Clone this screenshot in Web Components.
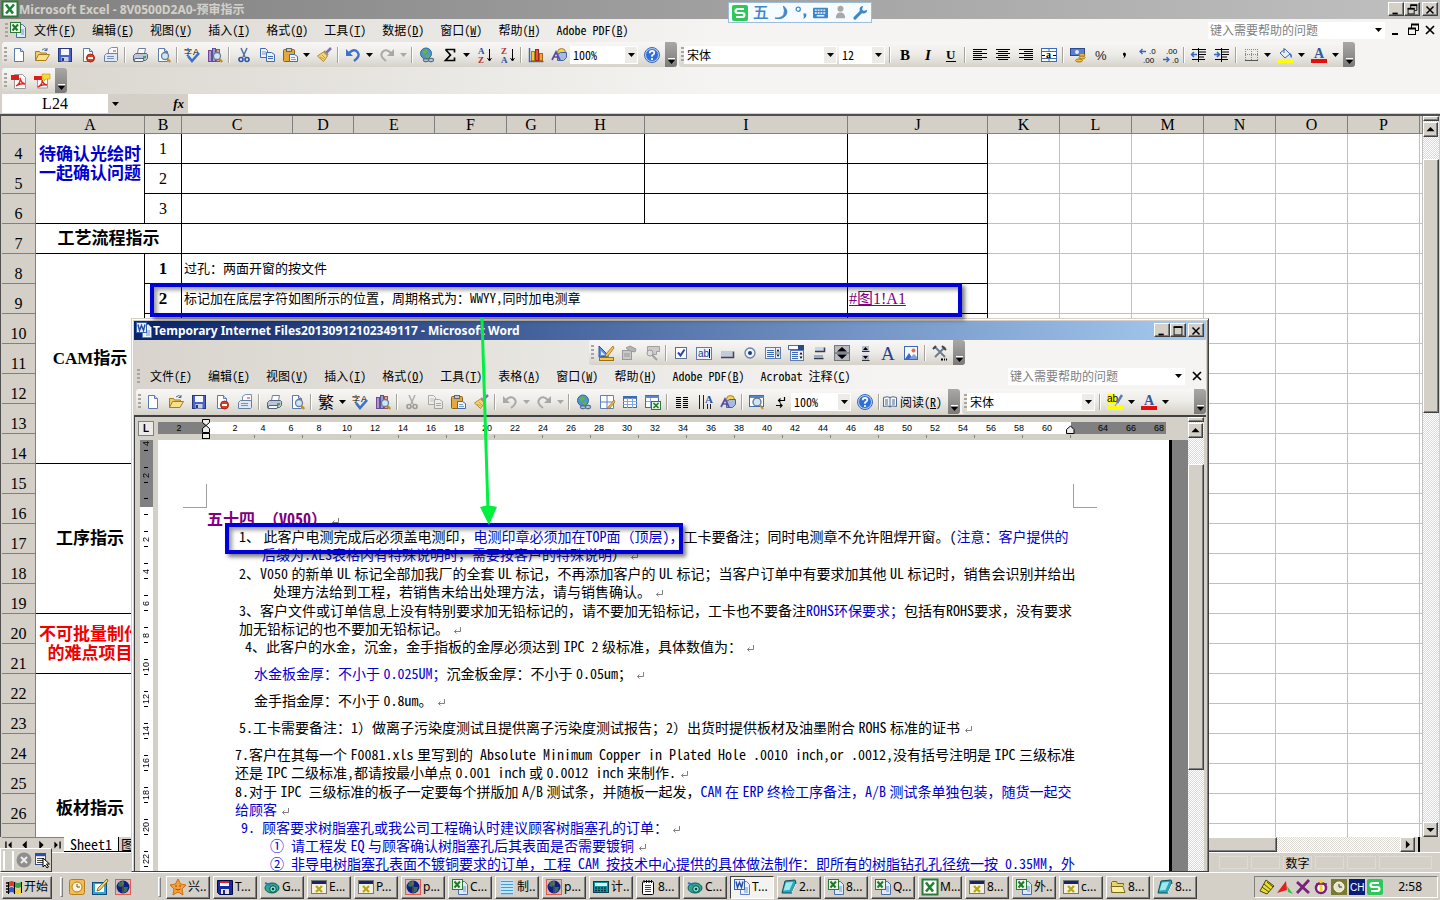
<!DOCTYPE html>
<html lang="zh-CN">
<head>
<meta charset="utf-8">
<title>Microsoft Excel - 8V0500D2A0-预审指示</title>
<style>
:root {
    --face: #d4d0c8;
    --song: 'Noto Sans Mono CJK SC', 'Noto Sans CJK SC', sans-serif;
    --cell: 'Liberation Serif', 'Noto Sans CJK SC', serif;
    --ui: 'Noto Sans', 'Noto Sans CJK SC', sans-serif;
}

html, body {
    height: 100%;
    margin: 0;
    overflow: hidden;
}

body {
    background: var(--face);
    color: #000;
    font: 12px/16px var(--song);
}
</style>
</head>
<body>
<desk-top></desk-top>

<script>
/* ---------- icon set, all on a 16x16 grid ---------- */
const page = '<path d="M3.5 1.5h6l3 3v10h-9z" fill="#fff" stroke="#5b7ba8"/><path d="M9.5 1.5v3h3" fill="#c9d8ee" stroke="#5b7ba8"/>';
const magnifier = '<circle cx="10" cy="9" r="3.5" fill="#cfe6f7" stroke="#6a7f96" stroke-width="1.3"/><path d="M12.5 12l2.7 3" stroke="#c98a2c" stroke-width="2.4"/>';
const excelDoc = '<path d="M6.5 2.5h6l3 3v10h-9z" fill="#dfeafc" stroke="#4a6ea8"/><path d="M11 8h3M11 10h3M11 12h3" stroke="#6f95cf"/><rect x=".5" y=".5" width="10" height="10" fill="#eaf5e6" stroke="#2c7a35"/><path d="M2.5 2.5l5 6M8 2.5l-5.500 6" stroke="#1f7a2b" stroke-width="2"/>';
const wordDoc = '<path d="M6.500 2.500h6l3 3v10h-9z" fill="#eef4ff" stroke="#5b7fc0"/><path d="M10 9h4M10 11h4M10 13h4" stroke="#6f95cf"/><rect x=".5" y=".5" width="10" height="10" fill="#e8effc" stroke="#3861b0"/><path d="M2 2.500l1.500 6 2-5 2 5 1.500-6" stroke="#1f4ba5" stroke-width="1.400" fill="none"/>';
const xWindow = '<rect x=".5" y="1.500" width="15" height="13" fill="#f3f0dc" stroke="#777"/><rect x="1" y="2" width="14" height="3" fill="#15246e"/><path d="M5 7l6 6M11 7l-6 6" stroke="#b9a514" stroke-width="2.200"/>';
const earth = '<rect x=".5" y=".5" width="15" height="15" fill="#d5bcb8" stroke="#e05a50"/><circle cx="8" cy="8" r="6.500" fill="#10207e"/><path d="M4 3l4-1 1 3-3 3-3-1zM9 8l4 0-1 4-3 2z" fill="#3b6d5d"/><path d="M8 1.500v13" stroke="#8a8f4c" stroke-width=".7"/>';
const book = '<path d="M4 2l10-1 1 3-4 10-10 0z" fill="#2aa7b3" stroke="#114d5c"/><path d="M5 3.500l7-.5-3.500 8-6 .5z" fill="#9ee9ef"/><path d="M11 14l4-9" stroke="#fff"/>';
const eye = '<ellipse cx="8" cy="9" rx="7" ry="5" fill="#2da898" stroke="#0d5b55"/><circle cx="9" cy="10" r="3.300" fill="#86e0cf" stroke="#08504c"/><circle cx="9" cy="10" r="1.200" fill="#063c3c"/><path d="M1 4l5 2" stroke="#2d7db3" stroke-width="2"/>';
const lines = (y, list) => list.map(([x, w], i) => `<path d="M${x} ${y + i * 2}.500h${w}" stroke="#000"/>`).join('');
const arrowDown = '<path d="M13.500 2v11M11.500 11l2 3 2-3" stroke="#000" fill="none"/>';
const globe = '<circle cx="7" cy="6.500" r="5.500" fill="#4f93cf" stroke="#2b6a9b"/><path d="M3 4l4-2 2 3-4 3zM7 8l4-1-1 4-3 0z" fill="#5db352"/><rect x="4.500" y="11.500" width="5" height="3" rx="1.500" fill="none" stroke="#56708f" stroke-width="1.300"/><rect x="9.500" y="11.500" width="5" height="3" rx="1.500" fill="none" stroke="#56708f" stroke-width="1.300"/>';
const glyph = (s, x, y, size, fill, extra = '') => `<text x="${x}" y="${y}" font-size="${size}" fill="${fill}" ${extra}>${s}</text>`;
const serifBold = 'font-family="Liberation Serif" font-weight="700"';
const sans = 'font-family="Liberation Sans"';

const ICONS = {
    new: page,
    open: '<path d="M1.500 13.500v-9h4l1 1.500h6v2" fill="#f3cf6b" stroke="#a87b1e"/><path d="M1.500 13.500l3-6h11l-3.500 6z" fill="#fbe08a" stroke="#a87b1e"/><path d="M8 3q3-3 5 0M13 1v2.500h-2.500" fill="none" stroke="#45699c"/>',
    save: '<rect x="1.500" y="1.500" width="13" height="13" fill="#4a62c4" stroke="#27377f"/><rect x="4" y="2" width="8" height="6" fill="#f4f6fb"/><rect x="4.500" y="10" width="7" height="4.500" fill="#c9cfe0"/><path d="M6 11v3" stroke="#27377f" stroke-width="2"/>',
    perm: page + '<circle cx="10.500" cy="11" r="4" fill="#dc3f28" stroke="#a12413"/><path d="M8 11h5" stroke="#fff" stroke-width="2"/>',
    mail: '<path d="M5.500 6.500v-4l3-2h6v7" fill="#f7f9fd" stroke="#7d8fab"/><path d="M10 4h3" stroke="#c33"/><path d="M1.500 8.500l2-2h11v7l-1 1h-12z" fill="#dfe7f3" stroke="#6980a5"/><path d="M4 9.500h7M4 11.500h7" stroke="#7890b5"/>',
    print: '<path d="M5.500 6.500l1-5h7l-1 5" fill="#fff" stroke="#6d7f9c"/><path d="M1.500 8.500l2-2h11l1 1v4l-2 2h-12z" fill="#bdc6d6" stroke="#56657f"/><path d="M3 11.500h9l-1 3h-9z" fill="#f3f6fa" stroke="#56657f"/><path d="M11 10h3" stroke="#35b045" stroke-width="2"/>',
    preview: page + magnifier,
    spell: glyph('字', 0, 8, 8, '#000') + glyph('A', 9, 8, 9, '#000', sans) + '<path d="M4 9l4 5 7-8" fill="none" stroke="#3f6fc8" stroke-width="2.600"/>',
    research: '<rect x="1.500" y="3.500" width="3" height="11" fill="#b292d4" stroke="#6b4e8f"/><rect x="5.500" y="1.500" width="3" height="13" fill="#9d9ad4" stroke="#55539a"/><rect x="9.500" y="2.500" width="3" height="12" fill="#d8a9a4" stroke="#955"/>' + magnifier,
    cut: '<path d="M5 1l4 9M11 1l-4 9" stroke="#5070a0" stroke-width="1.500"/><circle cx="5" cy="12.500" r="2" fill="none" stroke="#2e56a8" stroke-width="1.600"/><circle cx="11" cy="12.500" r="2" fill="none" stroke="#2e56a8" stroke-width="1.600"/>',
    copy: '<path d="M1.500 1.500h5l2 2v7h-7z" fill="#eaf1fc" stroke="#426aae"/><path d="M3 5h4M3 7h4" stroke="#7a9bd1"/><path d="M7.500 5.500h5l3 2v7h-8z" fill="#eaf1fc" stroke="#426aae"/><path d="M9 9.500h5M9 11.500h5" stroke="#426aae"/>',
    paste: '<rect x="1.500" y="2.500" width="11" height="12" rx="1" fill="#e3a83e" stroke="#8c6018"/><rect x="4.500" y="1.500" width="5" height="3" fill="#c8c8c8" stroke="#666"/><path d="M7.500 7.500h5l3 2v5h-8z" fill="#eef3fc" stroke="#426aae"/><path d="M9 10.500h4M9 12.500h5" stroke="#7a9bd1"/>',
    painter: '<path d="M15 1l-5 5" stroke="#7d6dba" stroke-width="2.500"/><path d="M8 4l4 4" stroke="#8f8f9a" stroke-width="2"/><path d="M1.500 9l6-4 4 4-4 5.500z" fill="#f4d774" stroke="#b08b28"/><path d="M4 10l4 2M6 8l3 3" stroke="#c79e3c"/>',
    undo: '<path d="M4 6q5-5 8.500-1t-3.500 9" fill="none" stroke="#3f6fd0" stroke-width="2.400"/><path d="M1 2v7h7z" fill="#3f6fd0"/>',
    redo: '<path d="M12 6q-5-5-8.500-1t3.500 9" fill="none" stroke="#a8a8a8" stroke-width="2"/><path d="M15 2v7h-7z" fill="#a8a8a8"/>',
    undogrey: '<path d="M4 6q5-5 8.500-1t-3.500 9" fill="none" stroke="#a8a8a8" stroke-width="2"/><path d="M1 2v7h7z" fill="#a8a8a8"/>',
    link: globe,
    sum: '<path d="M3.500 2.500h9v3M3.500 2.500l5 5.500-5 5.500h9v-3" fill="none" stroke="#000" stroke-width="1.700"/>',
    sortaz: glyph('A', 2, 7, 9, '#2a4fa8', serifBold) + glyph('Z', 2, 16, 9, '#b5322c', serifBold) + arrowDown,
    sortza: glyph('Z', 2, 7, 9, '#b5322c', serifBold) + glyph('A', 2, 16, 9, '#2a4fa8', serifBold) + arrowDown,
    chart: '<path d="M1.500 1v13.500h14" stroke="#3d6bb5" fill="none" stroke-width="1.500"/><rect x="3.500" y="4.500" width="3" height="9" fill="#f3c93c" stroke="#a8811a"/><rect x="7.500" y="2.500" width="3" height="11" fill="#e8553a" stroke="#962a18"/><rect x="11.500" y="6.500" width="3" height="7" fill="#f2a43a" stroke="#a86814"/>',
    draw: '<circle cx="10.500" cy="5.500" r="4" fill="#f4d25a" stroke="#ab8020"/><path d="M6.500 7.500l3-2h6v5l-3 3h-6z" fill="#a6bbe4" stroke="#4462a2"/><path d="M1 13l4-8 4 8M3 10h4" fill="none" stroke="#5c4ca8" stroke-width="1.700"/>',
    help: '<circle cx="8" cy="8" r="6.500" fill="#2f6fd8" stroke="#b9d0f4"/><circle cx="8" cy="8" r="7.500" fill="none" stroke="#3a66b0"/><path d="M5.700 6.300q0-2.400 2.300-2.400t2.300 2q0 1.300-2.300 2.600v1.300" stroke="#fff" stroke-width="1.700" fill="none"/><path d="M8 11v2" stroke="#fff" stroke-width="1.700"/>',
    bold: glyph('B', 3, 13, 15, '#000', serifBold),
    italic: glyph('I', 5, 13, 15, '#000', serifBold + ' font-style="italic"'),
    underline: glyph('U', 3, 12, 13, '#000', serifBold) + '<path d="M3 14.500h10" stroke="#000"/>',
    left: lines(2, [[1, 14], [1, 9], [1, 14], [1, 9], [1, 14], [1, 9]]),
    center: lines(2, [[1, 14], [3, 10], [1, 14], [3, 10], [1, 14], [3, 10]]),
    right: lines(2, [[1, 14], [6, 9], [1, 14], [6, 9], [1, 14], [6, 9]]),
    merge: '<rect x=".5" y="1.500" width="15" height="13" fill="#fff" stroke="#3d6bb5"/><path d="M0 4.500h16M0 11.500h16M8 2v2M8 12v2" stroke="#3d6bb5"/>' + glyph('a', 5, 11, 10, '#000', serifBold) + '<path d="M1 8.500h3M12 8.500h3" stroke="#000"/>',
    money: '<rect x=".5" y="1.500" width="14" height="7" fill="#5a7fd0" stroke="#2b4a90"/><circle cx="7" cy="5" r="2" fill="#dfe9fb"/><ellipse cx="12" cy="8" rx="3" ry="1.500" fill="#f2c14a" stroke="#a57615"/><ellipse cx="12" cy="10.500" rx="3" ry="1.500" fill="#f2c14a" stroke="#a57615"/><ellipse cx="9" cy="13.500" rx="3.500" ry="1.500" fill="#f2c14a" stroke="#a57615"/>',
    percent: glyph('%', 2, 13, 13, '#222', sans),
    comma: '<path d="M8 5.500q2 0 2 2t-3 4q1.500-2 1-2.500t-1-1.500 1-2z" fill="#000"/>',
    decinc: '<path d="M7 4.500h-6M3.500 2l-2.500 2.500 2.500 2.500" stroke="#3464c4" fill="none" stroke-width="1.300"/>' + glyph('.0', 10, 7, 8, '#000', sans) + glyph('.00', 4, 16, 8, '#000', sans),
    decdec: glyph('.00', 4, 7, 8, '#000', sans) + glyph('.0', 10, 16, 8, '#000', sans) + '<path d="M1 12.500h6M4.500 10l2.500 2.500-2.500 2.500" stroke="#3464c4" fill="none" stroke-width="1.300"/>',
    outdent: '<path d="M6 7.500h-6M3 5l-2.500 2.500 2.500 2.500" stroke="#3464c4" fill="none" stroke-width="1.500"/><path d="M1 2.500h14M8 5h7M8 7.500h7M8 10h5M1 12.500h13M7.500 1v14" stroke="#000"/>',
    indent: '<path d="M0 7.500h6M3 5l2.500 2.500-2.500 2.500" stroke="#3464c4" fill="none" stroke-width="1.500"/><path d="M1 2.500h14M8 5h7M8 7.500h7M8 10h5M1 12.500h13M7.500 1v14" stroke="#000"/>',
    borders: '<path d="M2 2.500h13M2 7.500h13M2.500 2v11M8.500 2v11M14.500 2v11" stroke="#888" stroke-dasharray="1 1"/><path d="M2 13.500h13" stroke="#555"/>',
    fill: '<path d="M3 6l5-4 5 5-5 4z" fill="#e6eefb" stroke="#4a6698"/><path d="M7 1v5" stroke="#4a6698"/><path d="M13 6q3 2 1.500 5-2-1-1.500-5z" fill="#3b76d6"/><rect y="12" width="16" height="4" fill="#ff0"/>',
    fontcolor: glyph('A', 3, 11, 14, '#33569f', serifBold) + '<rect y="12" width="16" height="4" fill="#e80c0c"/>',
    highlight: '<rect width="9" height="9" fill="#ff0"/>' + glyph('ab', 0, 8, 10, '#000', sans) + '<path d="M15 1l-5 8" stroke="#5d7db0" stroke-width="2.500"/><path d="M10 9l-2 3" stroke="#888"/><rect y="12" width="16" height="4" fill="#ff0"/>',
    pdf: '<path d="M3.500 1.500h8l3 3v11h-11z" fill="#fafafa" stroke="#9a9a9a"/><path d="M0 2h8v5h-8z" fill="#e11b1b"/><path d="M5 13q5-3 4-8 1 5 5 6-5-1-9 2z" fill="none" stroke="#d22" stroke-width="1.300"/>',
    pdfnote: '<path d="M3.500 3.500h10v11.500h-10z" fill="#fafafa" stroke="#9a9a9a"/><path d="M0 3h8v4h-8z" fill="#e11b1b"/><path d="M4 14q5-3 4-7 1 4 5 5-5-1-9 2z" fill="none" stroke="#d22" stroke-width="1.300"/><path d="M8 1h8v5h-4l-2 2v-2h-2z" fill="#f7d93a" stroke="#b5941a" stroke-width=".6"/>',
    design: '<path d="M1 1v11l10-1z" fill="#5b8fe0" stroke="#2a54a0"/><path d="M3 6v4l4 0z" fill="#dfeafb"/><path d="M15 1l-7 8-1 3 3-1 6-8z" fill="#f6c24a" stroke="#8d641a" stroke-width=".7"/><rect x="1.500" y="12.500" width="14" height="3" fill="#f4c73e" stroke="#97711a"/>',
    props: '<rect x="1.500" y="5.500" width="9" height="9" fill="#c9c9c9" stroke="#999"/><path d="M3 9h6M3 11h6" stroke="#999"/><path d="M5 3l4-2 6 3-1 3-5-1z" fill="#b4b4b4" stroke="#999"/>',
    code: '<path d="M3.500 1.500h12v5h-3v3h-9z" fill="#ccc" stroke="#a0a0a0"/><circle cx="6" cy="8" r="3" fill="#ddd" stroke="#999"/><path d="M8 10l5 5" stroke="#a0a0a0" stroke-width="2"/>',
    check: '<rect x="2.500" y="2.500" width="11" height="11" fill="#fff" stroke="#5d6f8c"/><path d="M5 7.500l2.500 3 4-6" fill="none" stroke="#2749a5" stroke-width="2"/>',
    textbox: '<rect x=".5" y="2.500" width="15" height="12" fill="#eef3fb" stroke="#5d7db0"/>' + glyph('ab', 2, 12, 10, '#1c3f92', sans) + '<path d="M13.500 4v9" stroke="#000"/>',
    push: '<rect x="2" y="6" width="12" height="6" fill="#c3cbd8"/><path d="M2 12.500h12.500v-6" stroke="#3b4658" fill="none" stroke-width="1.500"/>',
    radio: '<circle cx="8" cy="8" r="5" fill="#eef3fb" stroke="#6580ae" stroke-width="1.300"/><circle cx="8" cy="8" r="2" fill="#223b7c"/>',
    list: '<rect x=".5" y="2.500" width="15" height="11" fill="#eef3fb" stroke="#5d7db0"/><path d="M2 5.500h7M2 7.500h7M2 9.500h7M2 11.500h7" stroke="#3d69b4"/><path d="M10.500 3v10M11 8h4" stroke="#5d7db0"/><path d="M13 4l-1.500 2.500h3zM13 12l-1.500-2.500h3z" fill="#111"/>',
    combo: '<rect x=".5" y=".5" width="15" height="4" fill="#fff" stroke="#4d6fa8"/><rect x="10" y="0" width="6" height="5" fill="#2a4a8e"/><rect x="2.500" y="5.500" width="13" height="10" fill="#eef3fb" stroke="#5d7db0"/><path d="M4 7.500h6M4 9.500h6M4 11.500h6M4 13.500h6" stroke="#3d69b4"/><path d="M13 7l-1.500 2.500h3zM13 14l-1.500-2.500h3z" fill="#111"/>',
    toggle: '<path d="M4 2h9v4h-9z" fill="#cdd5e2"/><path d="M4 6.500h9.500v-4M3 13.500h9.500" stroke="#333d4d" fill="none" stroke-width="1.500"/><path d="M3 10h9v3h-9z" fill="#9fabc0"/>',
    spin: '<rect x=".5" y=".5" width="15" height="15" fill="#b4b9c2" stroke="#777"/><path d="M8 2l-5 4.500h10zM8 14l-5-4.500h10z" fill="#000"/><path d="M1 8h14" stroke="#555"/>',
    scroll: '<rect x="5" y="1" width="7" height="5" fill="#b4bccb"/><rect x="5" y="10" width="7" height="5" fill="#b4bccb"/><path d="M8.500 2l-2.500 3h5zM8.500 14l-2.500-3h5z" fill="#000"/><path d="M5 15.500h7.500M5 6.500h7.500" stroke="#333"/><rect x="6" y="7.500" width="5" height="2" fill="#dde"/>',
    label: glyph('A', 1, 15, 19, '#22428c', 'font-family="Liberation Serif"'),
    image: '<rect x="1.500" y="1.500" width="13" height="13" fill="#f5f9ff" stroke="#3d69b4"/><path d="M2 14l4-6 4 6z" fill="#3d69b4"/><path d="M6 14l5-5 3 3v2z" fill="#7ca1de"/><circle cx="10.500" cy="5.500" r="2" fill="#ef6a4a"/>',
    tools: '<path d="M3 2l10 10M13 2l-10 10" stroke="#6f7c90" stroke-width="2"/><path d="M1 4l3-3M10 1l4 4" stroke="#3c4657" stroke-width="2"/><path d="M9 14.500h2M12 14.500h1M14 14.500h1" stroke="#000" stroke-width="2"/>',
    tableborder: '<path d="M1.500 1.500h13v13h-13zM8 1.500v13M1.500 8h13" fill="#fff" stroke="#5b82bd"/><path d="M15 6l-6 7-1 2 3-1 5-6z" fill="#efb04a" stroke="#8d641a" stroke-width=".6"/>',
    table: '<rect x="1.500" y="2.500" width="13" height="11" fill="#fff" stroke="#3d6bb5"/><path d="M1 3.500h14" stroke="#3d6bb5" stroke-width="2.500"/><path d="M1 7.500h14M1 10.500h14M5.500 4v10M10.500 4v10" stroke="#86a6d8"/>',
    exceltable: '<rect x=".5" y="1.500" width="13" height="12" fill="#fff" stroke="#3d6bb5"/><path d="M0 3h14" stroke="#5c88cd" stroke-width="2"/><path d="M1 7.500h12M5.500 4v9" stroke="#86a6d8"/><rect x="6.500" y="7.500" width="9" height="8" fill="#e5f3e0" stroke="#2c7a35"/><path d="M8.500 9l5 5M13.500 9l-5 5" stroke="#1f7a2b" stroke-width="1.600"/>',
    columns: [0, 1, 2, 3, 4, 5].map(i => `<path d="M2 ${3 + i * 2}.500h5M9 ${3 + i * 2}.500h5" stroke="#000"/>`).join(''),
    textdir: '<path d="M2.500 1v14M6.500 1v14M10.500 10v5M13.500 10v5" stroke="#222"/>' + glyph('A', 8, 9, 11, '#2a4fa8', serifBold),
    docmap: '<rect x=".5" y="1.500" width="14" height="11" fill="#fff" stroke="#3d6bb5"/><path d="M1 3h14" stroke="#5c88cd" stroke-width="2"/><circle cx="8" cy="8" r="4" fill="#cfe6f7" stroke="#60758f" stroke-width="1.300"/><path d="M11 11l3 4" stroke="#c98a2c" stroke-width="2"/>',
    marks: '<path d="M12.500 3v3.500h-6M8.500 4.500l-2 2 2 2M4 11.500h6M8 9.500l2 2-2 2" stroke="#000" fill="none" stroke-width="1.200"/>',
    read: '<path d="M1.500 3.500q4-1.500 6.500 0 2.500-1.500 6.500 0v9q-4-1-6.500 0-2.500-1-6.500 0z" fill="#f5f8fd" stroke="#51688f"/><path d="M8 3.500v10M3 6h3M3 8h3M3 10h3M10 6h3M10 8h3M10 10h3" stroke="#51688f"/>',
    fan: glyph('繁', 0, 14, 16, '#000'),
    excel: '<rect x=".5" y=".5" width="15" height="15" fill="#fff" stroke="#2c7a35" stroke-width="2"/><path d="M4 3.500l7 9M12 3.500l-8 9" stroke="#1f8232" stroke-width="2.600"/>',
    exceldoc: excelDoc,
    worddoc: wordDoc,
    xwin: xWindow,
    earth: earth,
    book: book,
    eye: eye,
    flag: '<path d="M3 3q3-2 5 0v5q-2-2-5 0z" fill="#e43a2a"/><path d="M9 3q3 2 6 0v5q-3 2-6 0z" fill="#37a53a"/><path d="M3 9q3-2 5 0v5q-2-2-5 0z" fill="#2f58d8"/><path d="M9 9q3 2 6 0v5q-3 2-6 0z" fill="#f5cf2c"/><path d="M0 4h2M0 7h2M0 10h2M0 13h2" stroke="#000" stroke-width="1.500"/><path d="M2.500 3v12M8.500 3v12M15.500 3v11" stroke="#000"/>',
    clock: '<rect x=".5" y=".5" width="15" height="15" rx="2" fill="#f4bd53" stroke="#b87d1a"/><circle cx="8" cy="8" r="5" fill="#fff6dd" stroke="#b87d1a"/><path d="M8 5v3h3" stroke="#7a4c08" fill="none"/>',
    desktop: '<rect x=".5" y="3.500" width="14" height="12" fill="#39a8c8" stroke="#0b4d7c"/><path d="M3 5h9v8h-9z" fill="#fff"/><path d="M15 0l-9 9-1 3 3-1 8-9z" fill="#f5d46a" stroke="#5a4310" stroke-width=".7"/>',
    star: '<path d="M8 0l2.500 5 5.500 1-4 4 1 6-5-3-5 3 1-6-4-4 5.500-1z" fill="#f5a13a" stroke="#cf6d12"/><path d="M6 6v2M10 6v2M5.500 10q2.500 2 5 0" stroke="#a34b05" fill="none"/>',
    floppy: '<path d="M.5 1.500h15v14h-13l-2-2z" fill="#1a2a9c" stroke="#000a4a"/><rect x="3" y="2" width="9" height="5" fill="#fff"/><path d="M3 3h9" stroke="#d22" stroke-width="2"/><rect x="4" y="10" width="8" height="5" fill="#e4e4e4"/><rect x="6" y="11" width="2" height="4" fill="#1a2a9c"/>',
    notes: '<rect x="1.500" y=".5" width="13" height="15" fill="#f7fcff" stroke="#c6dbe8"/><path d="M2 2.500h12M2 5.500h12M2 8.500h12M2 11.500h12M2 14.500h12" stroke="#3c9fd8" stroke-width="1.400"/>',
    calc: '<rect x=".5" y="2.500" width="15" height="11" fill="#1295a2" stroke="#063f4c"/><rect x="2" y="4" width="12" height="3" fill="#d8f4f4"/><path d="M2 9h12M2 11.500h12" stroke="#032e3a" stroke-width="1.500" stroke-dasharray="2 1"/>',
    notepad: '<rect x="2.500" y="2.500" width="11" height="13" rx="1" fill="#fff" stroke="#000"/><path d="M4 1v3M6.500 1v3M9 1v3M11.500 1v3" stroke="#000"/><path d="M5 6.500h6M5 8.500h6M5 10.500h6M5 12.500h6" stroke="#444"/>',
    folder: '<path d="M1.500 13.500v-10l1-1h4l1 2h6v2" fill="#e9d36a" stroke="#7b6a14"/><path d="M2 13.500l-1-6h12l2 6z" fill="#fbf0a0" stroke="#7b6a14"/>',
    close: '<circle cx="8" cy="8" r="7.500" fill="#8e8e8e"/><path d="M5 5l6 6M11 5l-6 6" stroke="#eee" stroke-width="2"/>',
    pick: '<rect x="1.500" y="1.500" width="10" height="11" fill="#fff" stroke="#33508c"/><path d="M1 3h11" stroke="#2a4fa8" stroke-width="2.500"/><path d="M3 6.500h7M3 8.500h7M3 10.500h7" stroke="#444"/><path d="M9 6v9l2-2 2 3 1.500-1-2-3h3z" fill="#fff" stroke="#000"/>',
    diamond: '<path d="M7 1l8 6-7 8-7-3z" fill="#e9dd35" stroke="#4b4608"/><path d="M5 5l7 6M3 8l7 5M8 3l6 5" stroke="#4b4608"/>',
    peak: '<path d="M0 14l9-12 1 9z" fill="#ea1c1c"/><path d="M10 7l6 8-5-2z" fill="#25c43b"/>',
    cross: '<path d="M2 3l12 11M14 1l-12 13" stroke="#7a1f80" stroke-width="2.800"/>',
    orb: '<circle cx="8" cy="9" r="5" fill="#fff" stroke="#7a1f80" stroke-width="2.500"/><path d="M8 1v12" stroke="#f2d51c" stroke-width="3"/><path d="M3 5h11" stroke="#7a1f80" stroke-width="1.500"/>',
    watch: '<rect width="16" height="16" fill="#7b7a32"/><circle cx="8" cy="8" r="5" fill="#e7e5c8" stroke="#fff"/><path d="M8 5v3h3" stroke="#333" fill="none"/>',
    lang: '<rect width="16" height="16" fill="#0a1a78"/>' + glyph('CH', 1, 12, 10, '#fff', sans),
    sogou: '<rect width="16" height="16" rx="2" fill="#2fc65a"/><path d="M12 4h-6q-2.500 0-2.500 2t2.500 2h4q2.500 0 2.500 2t-2.500 2h-6" fill="none" stroke="#fff" stroke-width="2.200"/>',
    moon: '<path d="M10 1q6 5 2.500 10t-11.500 3q8 0 9.500-4t-.5-9z" fill="#3f86c8" stroke="#3f86c8"/>',
    punct: '<circle cx="4.500" cy="4.500" r="2.200" fill="none" stroke="#3f86c8" stroke-width="1.300"/><path d="M10 9h3q1 4-3 6 1-2 0-6z" fill="#3f86c8"/>',
    keyboard: '<rect x="0" y="3" width="16" height="11" rx="1" fill="#3f86c8"/><path d="M2 5.500h12M2 8.500h12" stroke="#fff" stroke-width="1.500" stroke-dasharray="2 1"/><path d="M4 11.500h8" stroke="#fff" stroke-width="1.500"/>',
    person: '<circle cx="8" cy="4" r="3.200" fill="#a9a9a9"/><path d="M3 14q0-6 5-6t5 6z" fill="#a9a9a9"/>',
    wrench: '<path d="M2 14l7-7" stroke="#3f86c8" stroke-width="3.200" stroke-linecap="round"/><path d="M15 5a4 4 0 1 1-4-4l-1.500 3.500 2 2z" fill="#3f86c8"/>',
    min: '<path d="M4 12h6" stroke="#000" stroke-width="2"/>',
    restore: '<path d="M6.500 6v-3.500h7v6h-2.500" fill="none" stroke="#000"/><path d="M6 2.500h8" stroke="#000" stroke-width="2"/><rect x="3.500" y="6.500" width="7" height="6" fill="none" stroke="#000"/><path d="M3 6.500h8" stroke="#000" stroke-width="2"/>',
    max: '<rect x="3.500" y="3.500" width="9" height="9" fill="none" stroke="#000"/><path d="M3 3.500h10" stroke="#000" stroke-width="2"/>',
    shut: '<path d="M4 4l8 8M12 4l-8 8" stroke="#000" stroke-width="1.700"/>',
    up: '<path d="M8 5l-5 5h10z"/>',
    down: '<path d="M3 6h10l-5 5z"/>',
    next: '<path d="M6 3v10l5-5z"/>',
    prev: '<path d="M10 3v10l-5-5z"/>',
    first: '<path d="M4.500 4v8" stroke="#000" stroke-width="1.500"/><path d="M11 4v8l-4-4z"/>',
    last: '<path d="M11.500 4v8" stroke="#000" stroke-width="1.500"/><path d="M5 4v8l4-4z"/>'
};

function icon(name, size = 16) {
    return `<svg width="${size}" height="${size}" viewBox="0 0 16 16" aria-hidden="true" font-family="Noto Sans CJK SC">${ICONS[name]}</svg>`;
}

const CARET = '<svg width="7" height="4" viewBox="0 0 7 4" aria-hidden="true"><path d="M0 0h7l-3.500 4z"/></svg>';

const RESET = `
* { box-sizing: border-box; }
svg { display: block; flex: none; overflow: visible; }
button { all: unset; box-sizing: border-box; }
`;

/* ---------- toolbar parts ---------- */
class ToolBar extends HTMLElement {
    constructor() {
        super();
        this.attachShadow({ mode: 'open' }).innerHTML = `
        <style>
        ${RESET}
        :host {
            display: flex;
            align-items: center;
            height: 25px;
            padding-left: 2px;
            border-radius: 3px;
            background: linear-gradient(#f8f7f5, #edebe7 50%, #d6d2ca);
            flex: none;
        }
        .grip {
            width: 3px;
            height: 16px;
            background: repeating-linear-gradient(#a8a59f 0 2px, transparent 2px 4px);
        }
        .cap {
            display: none;
            width: 12px;
            height: 25px;
            margin-left: 2px;
            background: linear-gradient(#a9a8a6, #7b7a78);
            border-radius: 0 3px 3px 0;
            flex-direction: column;
            align-items: center;
            justify-content: flex-end;
            padding-bottom: 3px;
            gap: 1px;
        }
        .cap::before {
            content: '';
            width: 7px;
            border-top: 1px solid #fff;
        }
        :host([cap]) .cap { display: flex; }
        .room { flex: 1; }
        </style>
        <span class="grip"></span><slot></slot><span class="room"></span>
        <button class="cap" aria-label="工具栏选项">${CARET}</button>`;
    }
}
customElements.define('tool-bar', ToolBar);

class ToolButton extends HTMLElement {
    connectedCallback() {
        const dim = this.hasAttribute('dim');
        this.attachShadow({ mode: 'open' }).innerHTML = `
        <style>
        ${RESET}
        :host { display: flex; flex: none; }
        button {
            display: flex;
            align-items: center;
            justify-content: center;
            gap: 2px;
            min-width: 23px;
            height: 22px;
            white-space: nowrap;
        }
        .drop { min-width: 11px; fill: ${dim ? '#a8a8a8' : '#000'}; }
        .grey { filter: grayscale(1) opacity(.5); }
        </style>
        <button class="${this.hasAttribute('grey') ? 'grey' : ''}" aria-label="${this.getAttribute('icon')}">${icon(this.getAttribute('icon'))}<slot></slot></button>
        ${this.hasAttribute('drop') ? `<button class="drop" aria-label="更多">${CARET}</button>` : ''}`;
    }
}
customElements.define('tool-button', ToolButton);

class ToolSep extends HTMLElement {
    constructor() {
        super();
        this.attachShadow({ mode: 'open' }).innerHTML = `
        <style>
        :host {
            display: block;
            width: 2px;
            height: 16px;
            margin: 0 2px;
            background: linear-gradient(90deg, #a6a39d 50%, #fff 50%);
            flex: none;
        }
        </style>`;
    }
}
customElements.define('tool-sep', ToolSep);

class ComboBox extends HTMLElement {
    connectedCallback() {
        this.attachShadow({ mode: 'open' }).innerHTML = `
        <style>
        ${RESET}
        :host {
            display: grid;
            grid-template-columns: 1fr 12px;
            height: 18px;
            margin-right: 2px;
            border: 1px solid #fff;
            background: #fff;
            flex: none;
        }
        select {
            grid-area: 1 / 1 / 2 / 3;
            appearance: none;
            border: 0;
            padding: 0 2px;
            background: none;
            color: #000;
            font: 12px/16px var(--song);
            min-width: 0;
            outline: 0;
        }
        span {
            grid-area: 1 / 2;
            display: grid;
            place-items: center;
            background: #ecebe7;
            pointer-events: none;
        }
        </style>
        <select aria-label="${this.getAttribute('label')}"><option>${this.getAttribute('value')}</option></select>
        <span>${CARET}</span>`;
    }
}
customElements.define('combo-box', ComboBox);

class MenuBar extends HTMLElement {
    connectedCallback() {
        const items = this.getAttribute('items').split('|').map(item =>
            `<button>${item.replace(/\((\w)\)/, '(<u>$1</u>)')}</button>`).join('');
        this.attachShadow({ mode: 'open' }).innerHTML = `
        <style>
        ${RESET}
        :host {
            display: flex;
            align-items: center;
            height: 23px;
            padding: 0 0 1px 5px;
            flex: none;
        }
        .grip {
            width: 3px;
            height: 14px;
            margin-right: 2px;
            background: repeating-linear-gradient(#a8a59f 0 2px, transparent 2px 4px);
        }
        button { padding: 0 8px; white-space: nowrap; }
        .room { flex: 1; }
        .ask {
            display: flex;
            align-items: center;
            width: 177px;
            height: 17px;
            background: #fff;
        }
        input {
            flex: 1;
            min-width: 0;
            border: 0;
            padding: 0 2px;
            background: none;
            font: 12px/16px var(--song);
            outline: 0;
        }
        input::placeholder { color: #808080; }
        .ask svg { margin-right: 3px; }
        </style>
        <span class="grip"></span><slot name="logo"></slot>${items}<span class="room"></span>
        <label class="ask"><input aria-label="帮助" placeholder="键入需要帮助的问题">${CARET}</label>
        <slot name="end"></slot>`;
    }
}
customElements.define('menu-bar', MenuBar);

/* caption bar with its three window buttons */
class TitleBar extends HTMLElement {
    connectedCallback() {
        const buttons = this.getAttribute('buttons').split(' ').map(name =>
            `<button aria-label="${name}">${icon(name, 14)}</button>`).join('');
        this.attachShadow({ mode: 'open' }).innerHTML = `
        <style>
        ${RESET}
        :host {
            display: flex;
            align-items: center;
            height: 19px;
            padding: 0 2px 1px 2px;
            gap: 1px;
            background: var(--caption);
            color: var(--caption-text);
            font: 700 12px/17px var(--ui);
            white-space: nowrap;
            flex: none;
        }
        .text { flex: 1; overflow: hidden; }
        .set { display: flex; }
        button {
            display: grid;
            place-items: center;
            width: 16px;
            height: 14px;
            background: var(--face);
            border: 1px solid;
            border-color: #fff #404040 #404040 #fff;
            box-shadow: inset -1px -1px #808080;
        }
        button:last-child { margin-left: 2px; }
        </style>
        ${icon(this.getAttribute('icon'))}<span class="text"><slot></slot></span><span class="set">${buttons}</span>`;
    }
}
customElements.define('title-bar', TitleBar);

/* vertical or horizontal scroll bar; before/thumb set the thumb's place */
class ScrollBar extends HTMLElement {
    connectedCallback() {
        const flat = this.hasAttribute('flat');
        const before = this.getAttribute('before');
        const thumb = this.getAttribute('thumb');
        this.attachShadow({ mode: 'open' }).innerHTML = `
        <style>
        ${RESET}
        :host {
            display: flex;
            flex-direction: ${flat ? 'row' : 'column'};
            width: ${flat ? 'auto' : '16px'};
            height: ${flat ? '15px' : 'auto'};
            flex: none;
            background: conic-gradient(#fff 25%, #dcd9d2 0 50%, #fff 0 75%, #dcd9d2 0) 0 0 / 2px 2px;
        }
        .btn, .thumb, .split {
            display: grid;
            place-items: center;
            background: var(--face);
            border: 1px solid;
            border-color: #fff #404040 #404040 #fff;
            box-shadow: inset -1px -1px #808080;
            flex: none;
        }
        .btn { width: 15px; height: 15px; }
        .btn svg { width: 13px; height: 13px; }
        .split { height: 5px; margin-bottom: 1px; }
        .before { flex: 0 0 ${before}px; }
        .thumb { flex: 0 1 ${thumb}px; }
        .rest { flex: 1; }
        </style>
        ${flat ? '' : `<span class="split"></span><button class="btn" aria-label="上">${icon('up')}</button>`}
        <span class="before"></span><span class="thumb"></span><span class="rest"></span>
        ${this.hasAttribute('endless') ? '' : `<button class="btn" aria-label="下">${icon(flat ? 'next' : 'down')}</button>`}`;
    }
}
customElements.define('scroll-bar', ScrollBar);

/* ---------- spreadsheet ---------- */
const COLS = [['A', 109], ['B', 37], ['C', 111], ['D', 61], ['E', 81], ['F', 72], ['G', 49], ['H', 89], ['I', 203], ['J', 140],
    ['K', 72], ['L', 72], ['M', 72], ['N', 72], ['O', 72], ['P', 72]];

/* cells of the bordered form, by row number */
const FORM = {
    4: '<td class="big top blue" rowspan="3">待确认光绘时<br>一起确认问题</td><td>1</td><td colspan="6"></td><td></td><td></td>',
    5: '<td>2</td><td colspan="6"></td><td></td><td></td>',
    6: '<td>3</td><td colspan="6"></td><td></td><td></td>',
    7: '<td class="big" colspan="2">工艺流程指示</td><td colspan="7"></td><td></td>',
    8: '<td class="big" rowspan="7">CAM指示</td><td class="big">1</td><td class="note" colspan="7">过孔：两面开窗的按文件</td><td></td>',
    9: '<td class="big">2</td><td class="note" colspan="7">标记加在底层字符如图所示的位置，周期格式为：WWYY,同时加电测章</td><td class="left"><a href="#">#图1!A1</a></td>',
    15: '<td class="big" rowspan="5">工序指示</td>',
    20: '<td class="big red" rowspan="2">不可批量制作<br>的难点项目</td>',
    22: '<td class="big" rowspan="9">板材指示</td>'
};

class WorkSheet extends HTMLElement {
    constructor() {
        super();
        const blank = '<td class="free"></td>'.repeat(7);
        let rows = '';
        for (let n = 4; n <= 30; n++) {
            const plain = '<td></td><td colspan="7"></td><td></td>';
            const form = n < 10 ? FORM[n] : (FORM[n] || '') + plain;
            rows += `<tr><th>${n < 27 ? n : ''}</th>${form}${blank}</tr>`;
        }
        this.attachShadow({ mode: 'open' }).innerHTML = `
        <style>
        :host {
            display: block;
            flex: 1;
            min-width: 0;
            overflow: hidden;
            background: #fff;
        }
        table {
            table-layout: fixed;
            width: 100%;
            border-collapse: separate;
            border-spacing: 0;
            font: 16px/18px var(--cell);
        }
        th, td {
            box-sizing: border-box;
            padding: 0;
            border: solid #000;
            border-width: 0 1px 1px 0;
            text-align: center;
            white-space: nowrap;
            overflow: hidden;
        }
        th {
            background: var(--face);
            border-color: #808080;
            font-weight: 400;
        }
        thead th { height: 18px; line-height: 17px; }
        tbody tr { height: 30px; }
        tbody th { vertical-align: bottom; }
        .free { border-color: #c0c0c0; }
        .big { font-size: 17px; line-height: 19px; font-weight: 700; }
        .top { vertical-align: top; padding-top: 11px; }
        .blue { color: #0000d0; }
        .red { color: #f00000; }
        .note {
            font: 13px/16px var(--song);
            text-align: left;
            padding: 0 0 2px 2px;
        }
        .left { text-align: left; padding-left: 1px; }
        a { color: #800080; }
        </style>
        <table>
            <colgroup><col style="width:34px">${COLS.map(c => `<col style="width:${c[1]}px">`).join('')}<col></colgroup>
            <thead><tr><th></th>${COLS.map(c => `<th>${c[0]}</th>`).join('')}<th></th></tr></thead>
            <tbody>${rows}</tbody>
        </table>`;
    }
}
customElements.define('work-sheet', WorkSheet);

class ExcelWindow extends HTMLElement {
    constructor() {
        super();
        this.attachShadow({ mode: 'open' }).innerHTML = `
        <style>
        ${RESET}
        :host {
            display: flex;
            flex-direction: column;
            min-height: 0;
            background: var(--face);
            --caption: linear-gradient(90deg, #808080, #c0c0c0);
            --caption-text: #d4d0c8;
        }
        .bars { background: linear-gradient(90deg, #d8d4cd, #f5f4f2 50%); }
        .row { display: flex; gap: 2px; padding: 0 0 1px 2px; }
        .end { display: flex; gap: 1px; padding: 0 2px 0 3px; }
        .formula {
            display: grid;
            grid-template-columns: 106px 80px 1fr;
            height: 19px;
            padding-left: 2px;
            font: 16px/19px var(--cell);
        }
        .formula input {
            border: 0;
            padding: 0;
            min-width: 0;
            font: inherit;
            text-align: center;
        }
        .fx {
            display: flex;
            align-items: center;
            justify-content: space-between;
            padding: 0 4px;
            font: italic 700 13px/18px 'Liberation Serif', serif;
        }
        .area {
            display: flex;
            flex: 1;
            min-height: 0;
            margin-top: 1px;
            padding: 0 1px 0 1px;
            border-top: 2px solid #505050;
            border-left: 1px solid #505050;
        }
        .tabs { display: flex; align-items: stretch; height: 15px; padding-left: 2px; }
        .nav { display: flex; width: 62px; justify-content: space-between; border-top: 1px solid #808080; }
        .tab {
            padding: 0 6px;
            background: #fff;
            border: solid #000;
            border-width: 0 1px 1px 0;
            font: 12px/14px var(--song);
            font-size: 14px;
        }
        .tab + .tab { background: var(--face); padding: 0 0 0 2px; }
        .tabs scroll-bar { flex: 1; }
        .corner { width: 22px; border-left: 2px solid #000; margin-left: 3px; }
        .status {
            display: flex;
            justify-content: flex-end;
            gap: 3px;
            height: 20px;
            padding: 3px 8px 3px 0;
            border-top: 1px solid #fff;
            line-height: 12px;
        }
        .status span {
            width: 29px;
            border: 1px solid #dedbd4;
            text-align: center;
        }
        .status .wide { width: 53px; }
        </style>
        <title-bar icon="excel" buttons="min restore shut">Microsoft Excel - 8V0500D2A0-预审指示</title-bar>
        <div class="bars">
            <menu-bar items="文件(F)|编辑(E)|视图(V)|插入(I)|格式(O)|工具(T)|数据(D)|窗口(W)|帮助(H)|Adobe PDF(B)">
                <span slot="logo">${icon('exceldoc')}</span>
                <span slot="end" class="end">${icon('min')}${icon('restore')}${icon('shut')}</span>
            </menu-bar>
            <div class="row">
                <tool-bar cap>
                    <tool-button icon="new"></tool-button><tool-button icon="open"></tool-button><tool-button icon="save"></tool-button><tool-button icon="perm"></tool-button><tool-button icon="mail"></tool-button><tool-sep></tool-sep>
                    <tool-button icon="print"></tool-button><tool-button icon="preview"></tool-button><tool-sep></tool-sep>
                    <tool-button icon="spell"></tool-button><tool-button icon="research"></tool-button><tool-sep></tool-sep>
                    <tool-button icon="cut"></tool-button><tool-button icon="copy"></tool-button><tool-button icon="paste" drop></tool-button><tool-button icon="painter"></tool-button><tool-sep></tool-sep>
                    <tool-button icon="undo" drop></tool-button><tool-button icon="redo" drop dim></tool-button><tool-sep></tool-sep>
                    <tool-button icon="link"></tool-button><tool-button icon="sum" drop></tool-button><tool-button icon="sortaz"></tool-button><tool-button icon="sortza"></tool-button><tool-sep></tool-sep>
                    <tool-button icon="chart"></tool-button><tool-button icon="draw"></tool-button>
                    <combo-box style="width:68px" label="显示比例" value="100%"></combo-box><tool-button icon="help"></tool-button>
                </tool-bar>
                <tool-bar cap>
                    <combo-box style="width:153px" label="字体" value="宋体"></combo-box><combo-box style="width:46px" label="字号" value="12"></combo-box><tool-sep></tool-sep>
                    <tool-button icon="bold"></tool-button><tool-button icon="italic"></tool-button><tool-button icon="underline"></tool-button><tool-sep></tool-sep>
                    <tool-button icon="left"></tool-button><tool-button icon="center"></tool-button><tool-button icon="right"></tool-button><tool-button icon="merge"></tool-button><tool-sep></tool-sep>
                    <tool-button icon="money"></tool-button><tool-button icon="percent"></tool-button><tool-button icon="comma"></tool-button><tool-button icon="decinc"></tool-button><tool-button icon="decdec"></tool-button><tool-sep></tool-sep>
                    <tool-button icon="outdent"></tool-button><tool-button icon="indent"></tool-button><tool-sep></tool-sep>
                    <tool-button icon="borders" drop></tool-button><tool-button icon="fill" drop></tool-button><tool-button icon="fontcolor" drop></tool-button>
                </tool-bar>
            </div>
            <div class="row">
                <tool-bar cap><tool-button icon="pdf"></tool-button><tool-button icon="pdfnote"></tool-button></tool-bar>
            </div>
        </div>
        <div class="formula">
            <input aria-label="名称框" value="L24">
            <span class="fx">${CARET}<span>fx</span></span>
            <input aria-label="编辑栏">
        </div>
        <div class="area">
            <work-sheet></work-sheet>
            <scroll-bar before="22" thumb="254"></scroll-bar>
        </div>
        <div class="tabs">
            <span class="nav">${icon('first', 14)}${icon('prev', 14)}${icon('next', 14)}${icon('last', 14)}</span>
            <button class="tab">Sheet1</button><button class="tab">图1</button>
            <scroll-bar flat before="0" thumb="1134"></scroll-bar><span class="corner"></span>
        </div>
        <div class="status">
            <span></span><span></span><span>数字</span><span></span><span></span><span class="wide"></span>
        </div>`;
    }
}
customElements.define('excel-window', ExcelWindow);

/* ---------- Word document ---------- */
/* [class, indent, text]; {…} is blue, ~ is a quarter-em gap, ^ is the paragraph mark */
const DOC = [
    ['', 33, '1、~此客户电测完成后必须盖电测印，{电测印章必须加在TOP面（顶层)，}工卡要备注；同时电测章不允许阻焊开窗。({注意：客户提供的}'],
    ['', 56, '{后缀为.XLS表格内有特殊说明时，需要按客户的特殊说明}）^'],
    ['para', 33, '2、V050~的新单~UL~标记全部加我厂的全套~UL~标记，不再添加客户的~UL~标记；当客户订单中有要求加其他~UL~标记时，销售会识别并给出'],
    ['', 67, '处理方法给到工程，若销售未给出处理方法，请与销售确认。^'],
    ['para', 33, '3、客户文件或订单信息上没有特别要求加无铅标记的，请不要加无铅标记，工卡也不要备注{ROHS环保要求；}包括有ROHS要求，没有要求'],
    ['', 33, '加无铅标记的也不要加无铅标记。^'],
    ['', 39, '4、此客户的水金，沉金，金手指板的金厚必须达到~IPC 2~级标准，具体数值为：^'],
    ['wide', 48, '{水金板金厚：不小于~0.025UM；}沉金板金厚：不小于~0.05um；^'],
    ['wide', 48, '金手指金厚：不小于~0.8um。^'],
    ['wide', 33, '5.工卡需要备注：1）做离子污染度测试且提供离子污染度测试报告；2）出货时提供板材及油墨附合~ROHS~标准的证书^'],
    ['wide', 29, '7.客户在其每一个~F0081.xls~里写到的 Absolute Minimum Copper in Plated Hole .0010 inch,or .0012,没有括号注明是~IPC~三级标准'],
    ['', 29, '还是~IPC~二级标准,都请按最小单点~0.001 inch~或~0.0012 inch~来制作.^'],
    ['para', 29, '8.对于~IPC 三级标准的板子一定要每个拼版加~A/B~测试条，并随板一起发，{CAM~在~ERP~终检工序备注，A/B~测试条单独包装，随货一起交}'],
    ['', 29, '{给顾客}^'],
    ['', 35, '{9. 顾客要求树脂塞孔或我公司工程确认时建议顾客树脂塞孔的订单：}^'],
    ['', 64, '{① 请工程发~EQ~与顾客确认树脂塞孔后其表面是否需要镀铜}^'],
    ['', 64, '{② 非导电树脂塞孔表面不镀铜要求的订单，工程 CAM 按技术中心提供的具体做法制作：即所有的树脂钻孔孔径统一按 0.35MM，外}']
];

const MARK = '<svg class="mark" width="8" height="8" viewBox="0 0 8 8" aria-hidden="true"><path d="M7.500 0v4.500h-6M3.500 2.500l-2 2 2 2" fill="none" stroke="#808080"/></svg>';

class DocPage extends HTMLElement {
    constructor() {
        super();
        const body = DOC.map(([cls, indent, text]) => `<p class="${cls}" style="padding-left:${indent}px">${text
            .replace(/~/g, '<span class="gap"> </span>')
            .replace(/\{/g, '<span class="blue">')
            .replace(/\}/g, '</span>')
            .replace('^', MARK)}</p>`).join('');
        this.attachShadow({ mode: 'open' }).innerHTML = `
        <style>
        :host {
            display: block;
            flex: 1;
            min-width: 0;
            overflow: hidden;
            padding: 44px 96px 0 25px;
            background: #fff;
            border-right: 3px solid #000;
            font: 14px/18px var(--song);
        }
        .corners {
            display: flex;
            justify-content: space-between;
        }
        .corners i {
            box-sizing: border-box;
            width: 24px;
            height: 24px;
            border: solid #a0a0a0;
            border-width: 0 1px 1px 0;
        }
        .corners i + i { border-width: 0 0 1px 1px; margin-right: -24px; }
        h1 {
            height: 20px;
            margin: 0 0 0 24px;
            color: #800080;
            font: 700 16px/20px var(--song);
        }
        p {
            height: 18px;
            margin: 0 0 0 23px;
            box-sizing: border-box;
            white-space: nowrap;
        }
        .body { margin-top: -1px; }
        .para { margin-top: 1px; }
        .wide { margin-top: 9px; }
        .blue { color: #0000d0; }
        .gap { font-size: 7px; }
        .mark { margin-left: 4px; vertical-align: -1px; }
        </style>
        <div class="corners"><i></i><i></i></div>
        <h1>五十四 （V050）${MARK}</h1>
        <div class="body">${body}</div>`;
    }
}
customElements.define('doc-page', DocPage);

class HRuler extends HTMLElement {
    constructor() {
        super();
        let nums = '';
        for (let n = 2; n <= 68; n += 2) nums += `<span>${n === 62 ? '' : n}</span>`;
        this.attachShadow({ mode: 'open' }).innerHTML = `
        <style>
        ${RESET}
        :host {
            display: flex;
            height: 23px;
            padding: 5px 0 0 3px;
            gap: 4px;
            font: 9px/12px 'Liberation Sans', sans-serif;
        }
        .tab {
            width: 16px;
            height: 15px;
            margin-top: -1px;
            border: 1px solid #808080;
            background: #eceae6;
            font: 700 10px/13px 'Liberation Sans', sans-serif;
            text-align: center;
        }
        .scale {
            position: relative;
            display: flex;
            width: 1008px;
            height: 12px;
            background: linear-gradient(90deg, #808080 48px, #fff 48px 913px, #808080 913px);
        }
        .scale::after {
            content: '';
            position: absolute;
            inset: 13px 95px auto 96px;
            height: 3px;
            background: repeating-linear-gradient(90deg, #808080 0 1px, transparent 1px 48px);
        }
        .scale span { width: 28px; flex: none; text-align: center; }
        .scale .lead { width: 42px; }
        .scale .zero { width: 21px; }
        svg { position: absolute; top: -3px; left: 43px; }
        svg + svg { left: 907px; top: 3px; }
        </style>
        <span class="tab">L</span>
        <div class="scale">
            <span class="lead">2</span><span class="zero"></span>${nums}
            <svg width="10" height="21" viewBox="0 0 10 21" aria-hidden="true"><path d="M1.500.5h7v3l-7 6v4h7v-4l-7-6z" fill="#ececec" stroke="#000"/><rect x="1.500" y="14.500" width="7" height="5" fill="#ececec" stroke="#000"/></svg>
            <svg width="10" height="10" viewBox="0 0 10 10" aria-hidden="true"><path d="M1.500 8.500v-4l4-3.500 3.500 3.500v4z" fill="#ececec" stroke="#000"/></svg>
        </div>`;
    }
}
customElements.define('h-ruler', HRuler);

class VRuler extends HTMLElement {
    constructor() {
        super();
        let nums = '';
        for (let n = 2; n <= 22; n += 2) nums += `<span>${n}</span>`;
        this.attachShadow({ mode: 'open' }).innerHTML = `
        <style>
        :host {
            display: flex;
            flex-direction: column;
            width: 13px;
            margin: 0 5px 0 5px;
            overflow: hidden;
            background: #fff;
            font: 9px/13px 'Liberation Sans', sans-serif;
            flex: none;
        }
        .top {
            display: flex;
            flex-direction: column;
            justify-content: flex-end;
            height: 67px;
            overflow: hidden;
            background: #808080;
            flex: none;
        }
        span {
            box-sizing: border-box;
            height: 32px;
            flex: none;
            writing-mode: vertical-rl;
            transform: rotate(180deg);
            text-align: center;
            background:
                linear-gradient(#000, #000) 5px 8px / 4px 1px no-repeat,
                linear-gradient(#000, #000) 5px 23px / 4px 1px no-repeat;
        }
        .half { height: 16px; background: linear-gradient(#000, #000) 5px 8px / 4px 1px no-repeat; }
        </style>
        <div class="top"><span>4</span><span>2</span><span class="half"></span></div>
        <span class="half"></span>${nums}`;
    }
}
customElements.define('v-ruler', VRuler);

class WordWindow extends HTMLElement {
    constructor() {
        super();
        this.attachShadow({ mode: 'open' }).innerHTML = `
        <style>
        ${RESET}
        :host {
            display: flex;
            flex-direction: column;
            padding: 2px 2px 0 2px;
            overflow: hidden;
            background: var(--face);
            border: 1px solid;
            border-color: #d4d0c8 #404040 #404040 #d4d0c8;
            box-shadow: inset 1px 1px #fff, inset -1px 0 #808080;
            --caption: linear-gradient(90deg, #0a246a, #a6caf0);
            --caption-text: #fff;
        }
        .bars { background: linear-gradient(90deg, #d8d4cd, #f5f4f2 70%); }
        .row { display: flex; gap: 2px; }
        .controls { padding: 0 0 0 455px; }
        .standard { padding: 1px 0 0 2px; }
        .standard tool-bar:last-child { flex: 1; }
        .standard tool-sep { margin: 0 2px; }
        menu-bar { padding-left: 3px; }
        .view {
            display: flex;
            flex: 1;
            min-height: 0;
            margin-top: 1px;
            border-top: 2px solid #404040;
            border-left: 1px solid #404040;
        }
        .left { display: flex; flex-direction: column; flex: 1; min-width: 0; }
        .paper { display: flex; flex: 1; min-height: 0; background: #808080; padding-right: 16px; }
        .paper v-ruler { box-shadow: -5px 0 #d4d0c8, 5px 0 #d4d0c8; }
        scroll-bar { margin-right: 2px; }
        </style>
        <title-bar icon="worddoc" buttons="min max shut">Temporary Internet Files20130912102349117 - Microsoft Word</title-bar>
        <div class="bars">
            <div class="row controls">
                <tool-bar cap>
                    <tool-button icon="design"></tool-button><tool-button icon="props"></tool-button><tool-button icon="code"></tool-button><tool-sep></tool-sep>
                    <tool-button icon="check"></tool-button><tool-button icon="textbox"></tool-button><tool-button icon="push"></tool-button><tool-button icon="radio"></tool-button><tool-button icon="list"></tool-button><tool-button icon="combo"></tool-button><tool-button icon="toggle"></tool-button><tool-button icon="spin"></tool-button><tool-button icon="scroll"></tool-button><tool-button icon="label"></tool-button><tool-button icon="image"></tool-button><tool-sep></tool-sep>
                    <tool-button icon="tools"></tool-button>
                </tool-bar>
            </div>
            <menu-bar items="文件(F)|编辑(E)|视图(V)|插入(I)|格式(O)|工具(T)|表格(A)|窗口(W)|帮助(H)|Adobe PDF(B)|Acrobat 注释(C)">
                <span slot="end" style="padding:0 1px 0 4px">${icon('shut')}</span>
            </menu-bar>
            <div class="row standard">
                <tool-bar cap>
                    <tool-button icon="new"></tool-button><tool-button icon="open"></tool-button><tool-button icon="save"></tool-button><tool-button icon="perm"></tool-button><tool-button icon="mail"></tool-button><tool-sep></tool-sep>
                    <tool-button icon="print"></tool-button><tool-button icon="preview"></tool-button><tool-sep></tool-sep>
                    <tool-button icon="fan" drop></tool-button><tool-button icon="spell"></tool-button><tool-button icon="research"></tool-button><tool-sep></tool-sep>
                    <tool-button icon="cut" grey></tool-button><tool-button icon="copy" grey></tool-button><tool-button icon="paste"></tool-button><tool-button icon="painter"></tool-button><tool-sep></tool-sep>
                    <tool-button icon="undogrey" drop dim></tool-button><tool-button icon="redo" drop dim></tool-button><tool-sep></tool-sep>
                    <tool-button icon="link"></tool-button><tool-button icon="tableborder"></tool-button><tool-button icon="table"></tool-button><tool-button icon="exceltable"></tool-button><tool-sep></tool-sep>
                    <tool-button icon="columns"></tool-button><tool-button icon="textdir"></tool-button><tool-button icon="draw"></tool-button><tool-sep></tool-sep>
                    <tool-button icon="docmap"></tool-button><tool-button icon="marks"></tool-button>
                    <combo-box style="width:60px" label="显示比例" value="100%"></combo-box><tool-button icon="help"></tool-button><tool-sep></tool-sep>
                    <tool-button icon="read"><span style="padding-right:4px">阅读(<u>R</u>)</span></tool-button>
                </tool-bar>
                <tool-bar cap>
                    <combo-box style="width:128px" label="字体" value="宋体"></combo-box><tool-sep></tool-sep>
                    <tool-button icon="highlight" drop></tool-button><tool-button icon="fontcolor" drop></tool-button>
                </tool-bar>
            </div>
        </div>
        <div class="view">
            <div class="left">
                <h-ruler></h-ruler>
                <div class="paper"><v-ruler></v-ruler><doc-page></doc-page></div>
            </div>
            <scroll-bar endless before="26" thumb="306"></scroll-bar>
        </div>`;
    }
}
customElements.define('word-window', WordWindow);

/* ---------- task bar ---------- */
const TASKS = [['star', '兴..'], ['floppy', 'T...'], ['eye', 'G...'], ['xwin', 'E...'], ['xwin', 'P...'], ['earth', 'p...'], ['exceldoc', 'C...'],
    ['notes', '制..'], ['earth', 'p...'], ['calc', '计..'], ['notepad', '8...'], ['eye', 'C...'], ['worddoc', 'T...'], ['book', '2...'],
    ['exceldoc', '8...'], ['exceldoc', 'Q...'], ['excel', 'M...'], ['xwin', '8...'], ['exceldoc', '外..'], ['xwin', 'c...'], ['folder', '8...'], ['book', '8...']];

class TaskBar extends HTMLElement {
    constructor() {
        super();
        this.attachShadow({ mode: 'open' }).innerHTML = `
        <style>
        ${RESET}
        :host {
            display: flex;
            align-items: center;
            height: 28px;
            padding: 1px 2px 0 2px;
            background: var(--face);
            border-top: 1px solid #fff;
            font: 12px/18px var(--ui);
            position: relative;
        }
        button {
            display: flex;
            align-items: center;
            gap: 2px;
            height: 23px;
            padding: 0 3px;
            overflow: hidden;
            white-space: nowrap;
            border: 1px solid;
            border-color: #fff #404040 #404040 #fff;
            box-shadow: inset -1px -1px #808080;
        }
        .start { width: 50px; }
        .grip {
            width: 3px;
            height: 20px;
            border: 1px solid;
            border-color: #fff #808080 #808080 #fff;
            margin: 0 6px 0 8px;
            flex: none;
        }
        .quick { display: flex; gap: 7px; width: 89px; }
        .quick + .grip { margin: 0 5px 0 0; }
        .tasks { display: flex; gap: 3px; flex: 1; min-width: 0; }
        .tasks button { flex: 0 1 44px; }
        .tasks .on {
            background: #f4f3f0;
            border-color: #404040 #fff #fff #404040;
            box-shadow: none;
        }
        .tray {
            display: flex;
            align-items: center;
            gap: 2px;
            height: 22px;
            width: 184px;
            padding-left: 4px;
            border: 1px solid;
            border-color: #808080 #fff #fff #808080;
        }
        time { margin-left: auto; padding-right: 15px; }
        </style>
        <button class="start">${icon('flag')}开始</button>
        <span class="grip"></span>
        <span class="quick">${icon('clock')}${icon('desktop')}${icon('earth')}</span>
        <span class="grip"></span>
        <span class="tasks">${TASKS.map(([name, text], i) => `<button class="${i === 12 ? 'on' : ''}">${icon(name)}${text}</button>`).join('')}</span>
        <span class="tray">${['diamond', 'peak', 'cross', 'orb', 'watch', 'lang', 'sogou'].map(n => icon(n)).join('')}<time>2:58</time></span>`;
    }
}
customElements.define('task-bar', TaskBar);

/* floating input-method strip */
class ImeBar extends HTMLElement {
    constructor() {
        super();
        this.attachShadow({ mode: 'open' }).innerHTML = `
        <style>
        ${RESET}
        :host {
            display: flex;
            align-items: center;
            justify-content: space-between;
            padding: 0 3px;
            background: #f6fbff;
            border: 1px solid #9fbdd6;
            color: #3f86c8;
            font: 500 16px/19px var(--ui);
        }
        </style>
        ${icon('sogou')}<span>五</span>${['moon', 'punct', 'keyboard', 'person', 'wrench'].map(n => icon(n, 15)).join('')}`;
    }
}
customElements.define('ime-bar', ImeBar);

class DeskTop extends HTMLElement {
    constructor() {
        super();
        this.attachShadow({ mode: 'open' }).innerHTML = `
        <style>
        ${RESET}
        :host {
            display: grid;
            grid-template-rows: minmax(0, 1fr) auto;
            height: 100%;
            position: relative;
            overflow: hidden;
        }
        word-window {
            position: absolute;
            inset: 318px 231px 28px 131px;
        }
        ime-bar {
            position: absolute;
            left: 728px;
            top: 2px;
            width: 144px;
            height: 21px;
        }
        .mini {
            position: absolute;
            left: 0;
            bottom: 28px;
            display: flex;
            align-items: center;
            gap: 2px;
            width: 52px;
            height: 24px;
            padding-left: 2px;
            background: var(--face);
            border: 1px solid;
            border-color: #fff #404040 #404040 #fff;
        }
        .mini::before {
            content: '';
            width: 7px;
            height: 19px;
            border: solid #fff;
            border-width: 0 2px;
        }
        .ink {
            position: absolute;
            inset: 0;
            pointer-events: none;
            overflow: visible;
        }
        .box {
            position: absolute;
            border: 4px solid #0000d8;
            box-shadow: 3px 3px 4px rgba(0, 0, 0, .5), inset 3px 3px 4px rgba(0, 0, 0, .4);
            pointer-events: none;
        }
        .one { left: 150px; top: 283px; width: 812px; height: 34px; }
        .two { left: 225px; top: 523px; width: 458px; height: 31px; }
        </style>
        <excel-window></excel-window>
        <task-bar></task-bar>
        <word-window></word-window>
        <div class="mini">${icon('close')}${icon('pick')}</div>
        <ime-bar></ime-bar>
        <div class="box one"></div>
        <div class="box two"></div>
        <svg class="ink" width="100%" height="100%" aria-hidden="true"><path d="M482 318L488 510" stroke="#00f040" stroke-width="3"/><path d="M480 507q8-3 17 0l-8 18z" fill="#00f040"/></svg>`;
    }
}
customElements.define('desk-top', DeskTop);
</script>
</body>
</html>
